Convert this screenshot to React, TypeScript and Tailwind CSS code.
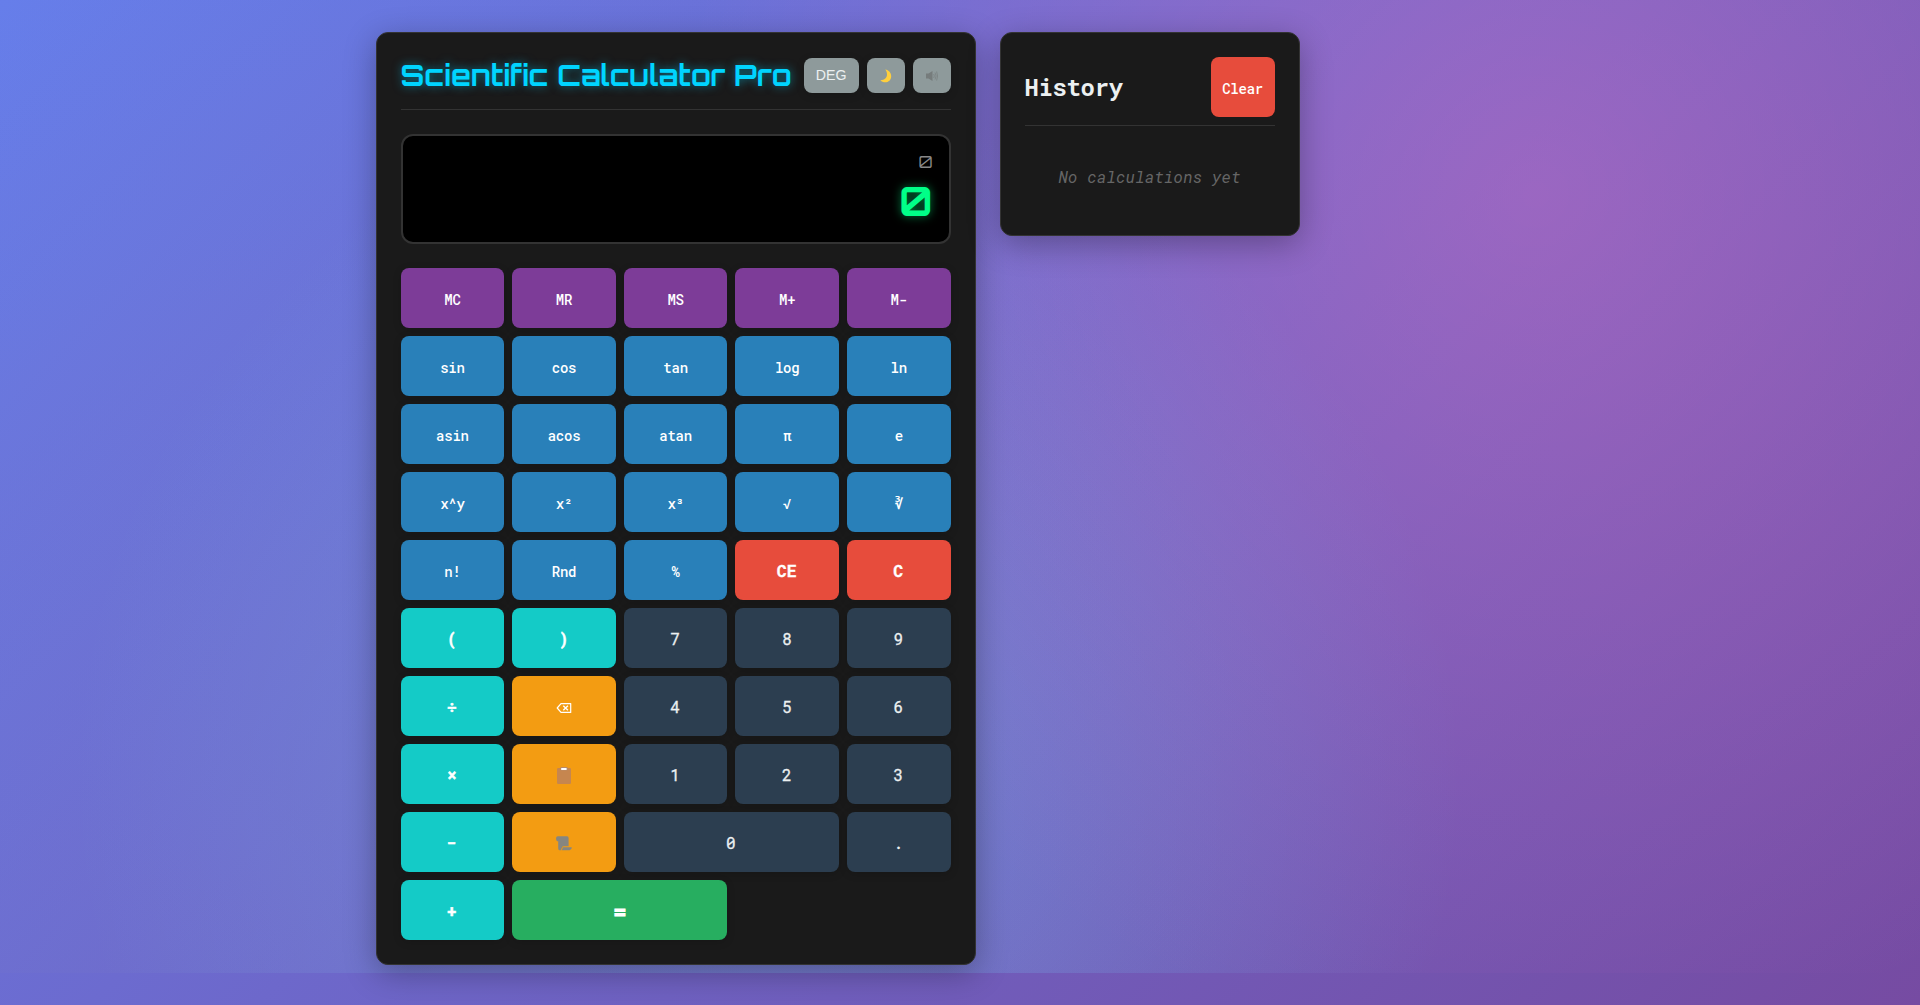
import React from "react";

type Kind = "mem" | "fn" | "clear" | "op" | "num" | "tool" | "eq";
type Key = { label: string; kind: Kind; wide?: boolean };

const keys: Key[] = [
  ...["MC", "MR", "MS", "M+", "M-"].map((label): Key => ({ label, kind: "mem" })),
  ...["sin", "cos", "tan", "log", "ln", "asin", "acos", "atan", "π", "e", "x^y", "x²", "x³", "√", "∛", "n!", "Rnd", "%"].map(
    (label): Key => ({ label, kind: "fn" })
  ),
  { label: "CE", kind: "clear" },
  { label: "C", kind: "clear" },
  { label: "(", kind: "op" },
  { label: ")", kind: "op" },
  { label: "7", kind: "num" },
  { label: "8", kind: "num" },
  { label: "9", kind: "num" },
  { label: "÷", kind: "op" },
  { label: "⌫", kind: "tool" },
  { label: "4", kind: "num" },
  { label: "5", kind: "num" },
  { label: "6", kind: "num" },
  { label: "×", kind: "op" },
  { label: "📋", kind: "tool" },
  { label: "1", kind: "num" },
  { label: "2", kind: "num" },
  { label: "3", kind: "num" },
  { label: "−", kind: "op" },
  { label: "📜", kind: "tool" },
  { label: "0", kind: "num", wide: true },
  { label: ".", kind: "num" },
  { label: "+", kind: "op" },
  { label: "=", kind: "eq", wide: true },
];

const styles: Record<Kind, string> = {
  mem: "bg-[#7d3c98] text-[14px] tracking-[-0.24px] font-medium pt-[2px]",
  fn: "bg-[#2980b9] text-[14px] tracking-[-0.24px] font-medium pt-[2px]",
  clear: "bg-[#e74c3c] text-[16.5px] font-bold pt-[2px] pr-px [-webkit-text-stroke:0.3px_white]",
  op: "bg-[#14cbc7] text-[16px] font-bold pt-[2px] pr-px [-webkit-text-stroke:0.5px_white]",
  num: "bg-[#2c3e50] text-[16px] font-normal pt-[2px] pr-px text-[#ecf0f1] [-webkit-text-stroke:0.3px_#ecf0f1]",
  tool: "bg-[#f39c12]",
  eq: "bg-[#27ae60] text-[22.4px] font-bold pt-[2px] [-webkit-text-stroke:0.8px_white]",
};

function Backspace() {
  return (
    <svg className="mt-1" width="16" height="12" viewBox="0 0 16 12" fill="none" stroke="white">
      <path d="M5 1.6h9.700v8.800H5L1.200 6z" strokeWidth="1.200" strokeLinejoin="round" />
      <path d="M7.300 3.700l4.600 4.600M11.900 3.700L7.300 8.300" strokeWidth="1.400" />
    </svg>
  );
}

function Clipboard() {
  return (
    <svg className="mt-0.5 ml-px" width="14" height="17" viewBox="0 0 14 17">
      <rect x="0" y="1" width="14" height="16" rx="1.200" fill="#c6864f" />
      <rect x="3.200" y="0" width="7.600" height="3.600" rx="1.400" fill="#b98a66" />
      <path d="M4.200 1h5.400v2H4.200z" fill="white" />
    </svg>
  );
}

function Scroll() {
  return (
    <svg className="mt-[2px]" width="16" height="15" viewBox="0 0 16 15" fill="#868680">
      <path d="M1.800 0.300H11a1.600 1.600 0 0 1 1.600 1.600V10.300H7.600Q5.900 10.300 5.600 12.300L5 14.200H3.500Q2.200 14.200 2.200 12.600V5.200H1.200Q0 4.600 0 2.300Q0.200 0.500 1.800 0.300z" />
      <path d="M6.600 11.200h9.200q0 2.800-2.200 3H5.700q0.900-0.800 0.900-3z" />
    </svg>
  );
}

function Moon() {
  return (
    <svg className="mt-px ml-px" width="12" height="14" viewBox="0 0 12 14">
      <path d="M5.200 0.400C8.800 1 11.200 3.700 11.200 7.200C11.200 10.800 8.500 13.300 5.300 13.300C3.300 13.300 1.600 12.500 0.400 11.200C4.400 11.300 7 9 7 5.600C7 3.500 6.400 1.800 5.200 0.400z" fill="#ffcf3d" />
    </svg>
  );
}

function Speaker() {
  return (
    <svg className="mt-[2px]" width="12" height="12" viewBox="0 0 12 12" fill="none" stroke="#7a8080">
      <path d="M0 3.500h2.500L6.500 1v10L2.500 8.500H0z" fill="#767c7c" stroke="none" />
      <path d="M7.700 4q1.200 2 0 4M9 2.500q2.200 3.500 0 7M10.600 1.500q2 4.500 0 9" strokeWidth="0.800" />
    </svg>
  );
}

const icons: Record<string, React.ReactNode> = {
  "⌫": <Backspace />,
  "📋": <Clipboard />,
  "📜": <Scroll />,
  "∛": <span className="font-bold">∛</span>,
};

const panel = "rounded-xl border border-[#333] bg-[#1a1a1a] p-6 shadow-[0_8px_32px_rgba(0,0,0,0.3)]";
const small = "flex h-[35px] items-center justify-center rounded-lg bg-[#8e9a9b] shadow-[0_2px_8px_rgba(0,0,0,0.15)]";

export default function App() {
  return (
    <div className="relative h-[1005px] overflow-hidden bg-[linear-gradient(135deg,#667eea_0%,#764ba2_100%)] text-white font-['Roboto_Mono','DejaVu_Sans_Mono',monospace]">
      <div className="absolute inset-x-0 top-0 h-[973px] bg-[radial-gradient(circle_at_20%_80%,rgba(120,119,198,0.3)_0%,transparent_50%),radial-gradient(circle_at_80%_20%,rgba(255,119,198,0.3)_0%,transparent_50%),radial-gradient(circle_at_40%_80%,rgba(120,219,255,0.3)_0%,transparent_50%)]" />
      <div className="relative mx-auto flex w-[1200px] items-start gap-6 pt-8 pl-[15.6px]">
        <main className={`w-[600px] ${panel}`}>
          <header className="mb-6 flex items-center justify-between border-b border-[#333] pb-4">
            <h1 className="h-9 text-[28.8px] leading-9 font-bold tracking-[-0.03px] whitespace-nowrap text-[#00d4ff] [font-feature-settings:'liga'_1] font-['Orbitron','DejaVu_Sans',sans-serif] [text-shadow:0_0_10px_rgba(0,212,255,0.5)]">
              Scientific Calculator Pro
            </h1>
            <div className="flex gap-2 font-['Liberation_Sans',sans-serif] text-[#ecf0f1]">
              <button className={`w-[55px] pt-px text-[14.2px] ${small}`}>DEG</button>
              <button className={`w-[38px] ${small}`}>
                <Moon />
              </button>
              <button className={`w-[38px] ${small}`}>
                <Speaker />
              </button>
            </div>
          </header>
          <section className="mb-6 h-[110px] rounded-xl border-2 border-[#333] bg-black p-4 text-right font-['Orbitron','Inter',sans-serif]">
            <div className="h-5 text-[16.8px] leading-[19px] text-[#888]">0</div>
            <div className="mt-2 text-[40px] leading-[43px] font-bold text-[#00ff88] [text-shadow:0_0_10px_rgba(0,255,136,0.5)]">0</div>
          </section>
          <div className="grid grid-cols-5 gap-2">
            {keys.map((k) => (
              <button
                key={k.label}
                className={`flex h-[60px] items-center justify-center rounded-lg shadow-[0_2px_8px_rgba(0,0,0,0.15)] ${k.wide ? "col-span-2" : ""} ${styles[k.kind]}`}
              >
                {icons[k.label] ?? k.label}
              </button>
            ))}
          </div>
        </main>
        <aside className={`h-[204px] w-[300px] ${panel}`}>
          <div className="flex items-center justify-between border-b border-[#333] pb-2">
            <h2 className="text-[24px] font-bold tracking-[-0.4px] text-[#ecf0f1]">History</h2>
            <button className="h-[60px] w-16 rounded-lg bg-[#e74c3c] pt-[2px] text-[14px] font-medium tracking-[-0.24px]">Clear</button>
          </div>
          <p className="mt-[39px] text-center text-[16px] leading-6 tracking-[0.21px] text-[#666] italic">No calculations yet</p>
        </aside>
      </div>
    </div>
  );
}
